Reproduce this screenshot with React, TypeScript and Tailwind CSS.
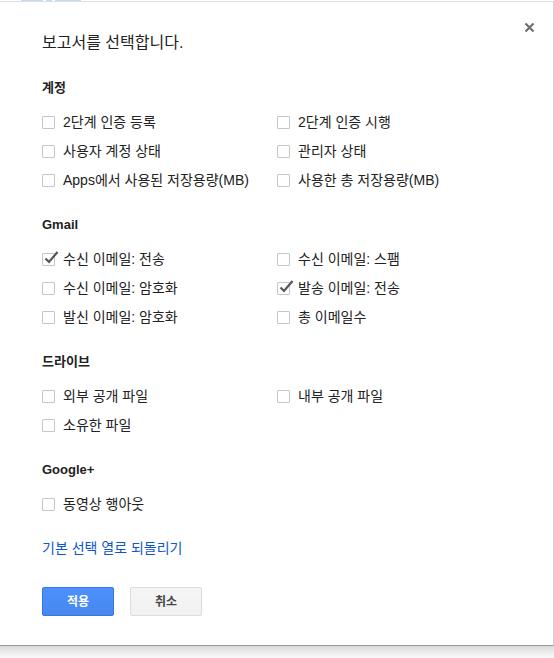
import type { ReactNode } from "react";

type Opt = { label: string; checked?: boolean };

const sections: { title: string; items: Opt[] }[] = [
  {
    title: "계정",
    items: [
      { label: "2단계 인증 등록" },
      { label: "2단계 인증 시행" },
      { label: "사용자 계정 상태" },
      { label: "관리자 상태" },
      { label: "Apps에서 사용된 저장용량(MB)" },
      { label: "사용한 총 저장용량(MB)" },
    ],
  },
  {
    title: "Gmail",
    items: [
      { label: "수신 이메일: 전송", checked: true },
      { label: "수신 이메일: 스팸" },
      { label: "수신 이메일: 암호화" },
      { label: "발송 이메일: 전송", checked: true },
      { label: "발신 이메일: 암호화" },
      { label: "총 이메일수" },
    ],
  },
  {
    title: "드라이브",
    items: [
      { label: "외부 공개 파일" },
      { label: "내부 공개 파일" },
      { label: "소유한 파일" },
    ],
  },
  {
    title: "Google+",
    items: [{ label: "동영상 행아웃" }],
  },
];

function Check({ on }: { on?: boolean }) {
  return (
    <span className="relative block h-[13px] w-[13px] shrink-0 rounded-[1px] border border-[#c6c6c6] bg-white">
      {on && (
        <svg
          width="16"
          height="15"
          viewBox="0 0 16 15"
          className="absolute left-[1px] top-[-4px] overflow-visible"
        >
          <path
            d="M1.5 8.5 L5 12 L13.5 2"
            fill="none"
            stroke="#555"
            strokeWidth="2.2"
          />
        </svg>
      )}
    </span>
  );
}

function Section({ title, children }: { title: string; children: ReactNode }) {
  return (
    <div>
      <h3 className="h-4 text-[13px] font-bold leading-4 text-[#222]">{title}</h3>
      <div className="mt-[12px] grid grid-cols-[235px_1fr]">{children}</div>
    </div>
  );
}

export default function App() {
  return (
    <div
      className="relative h-[658px] w-[554px] overflow-hidden bg-white text-[#222]"
      style={{ fontFamily: '"Liberation Sans", "Noto Sans CJK KR", sans-serif' }}
    >
      {/* strip of the page behind */}
      <div className="flex h-[1px] gap-[3px] pl-[21px]">
        <span className="w-[22px] bg-[#c6d9f6]" />
        <span className="w-[6px] bg-[#c6d9f6]" />
        <span className="w-[26px] bg-[#c6d9f6]" />
      </div>

      <div className="relative h-[645px] border-t border-r border-b border-t-[#e0e0e0] border-r-[#d0d0d0] border-b-[#9a9a9a] bg-white px-[42px] pt-[31px]">
        <button
          type="button"
          aria-label="닫기"
          className="absolute right-[18px] top-[19px] flex h-[12px] w-[12px] items-center justify-center"
        >
          <svg width="11" height="11" viewBox="0 0 11 11">
            <path d="M1.5 1.5 L9.5 9.5 M9.5 1.5 L1.5 9.5" stroke="#6f6f6f" strokeWidth="2.2" />
          </svg>
        </button>

        <h2 className="h-5 text-[16px] leading-5 text-[#222]">보고서를 선택합니다.</h2>

        <div className="mt-[27px] flex flex-col gap-[22px]">
          {sections.map((s) => (
            <Section key={s.title} title={s.title}>
              {s.items.map((it) => (
                <label key={it.label} className="flex h-[29px] items-center gap-[8px] text-[14px] text-[#222]">
                  <Check on={it.checked} />
                  <span>{it.label}</span>
                </label>
              ))}
            </Section>
          ))}
        </div>

        <a className="mt-[21px] block h-4 text-[14px] leading-4 text-[#1155cc]">기본 선택 열로 되돌리기</a>

        <div className="mt-[31px] flex gap-4">
          <button
            type="button"
            className="h-[29px] w-[72px] rounded-[2px] border border-[#3079ed] bg-[#4d90fe] bg-gradient-to-b from-[#4d90fe] to-[#4787ed] text-[12px] font-bold text-white"
          >
            적용
          </button>
          <button
            type="button"
            className="h-[29px] w-[72px] rounded-[2px] border border-[#dcdcdc] bg-gradient-to-b from-[#f5f5f5] to-[#f1f1f1] text-[12px] font-bold text-[#444]"
          >
            취소
          </button>
        </div>
      </div>

      <div className="h-[12px] bg-gradient-to-b from-[#dcdcdc] to-[#fafafa]" />
    </div>
  );
}
